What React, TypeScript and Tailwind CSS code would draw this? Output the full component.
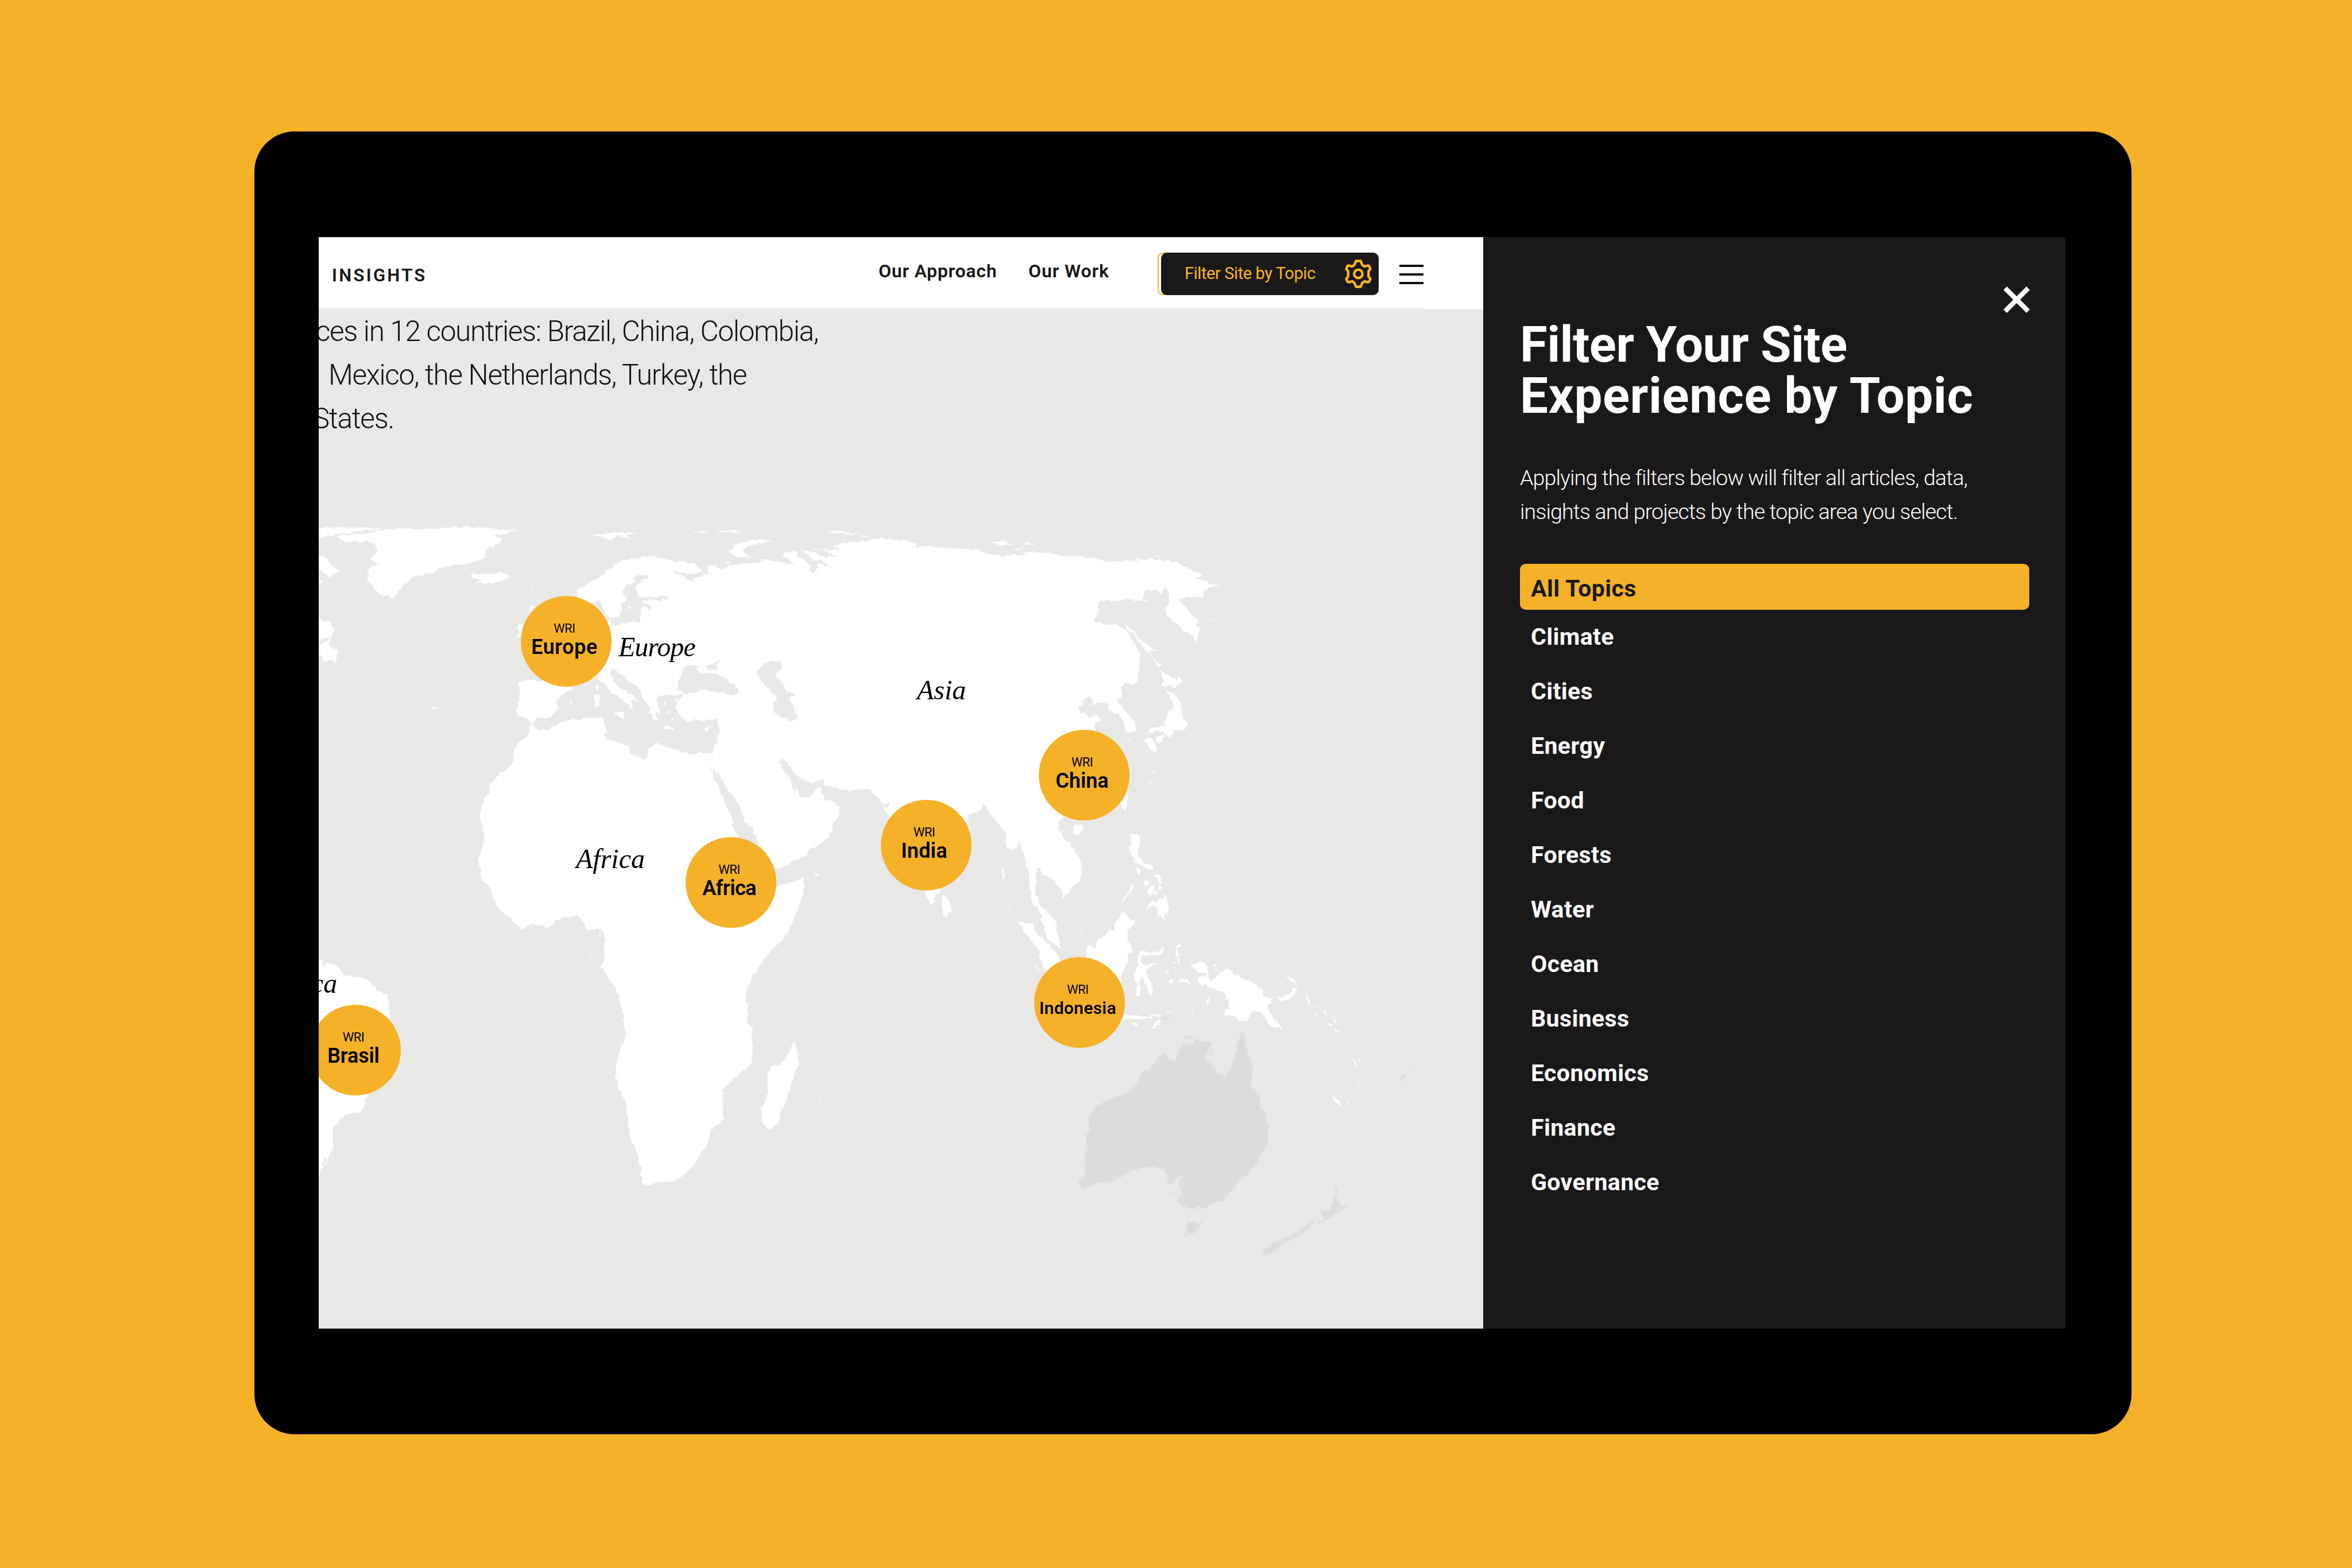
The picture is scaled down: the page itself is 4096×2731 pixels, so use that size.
const TOPICS = ["Climate", "Cities", "Energy", "Food", "Forests", "Water", "Ocean", "Business", "Economics", "Finance", "Governance"];

type Office = { name: string; x: number; y: number; text: string };

const OFFICES: Office[] = [
  { name: "Europe", x: 431, y: 579.5, text: "text-[36px] tracking-[0.5px]" },
  { name: "Africa", x: 718, y: 1000, text: "text-[36px] tracking-[-0.6px]" },
  { name: "India", x: 1057.5, y: 935, text: "text-[36px] tracking-[0.2px]" },
  { name: "China", x: 1332.5, y: 812.5, text: "text-[36px] tracking-[0px]" },
  { name: "Indonesia", x: 1325, y: 1209, text: "text-[30px] tracking-[0.3px]" },
  { name: "Brasil", x: 63.5, y: 1292, text: "text-[36px] tracking-[-0.2px]" },
];

function Pin({ office }: { office: Office }) {
  return (
    <div
      className="absolute flex h-[158px] w-[158px] -translate-x-1/2 -translate-y-1/2 flex-col items-center rounded-full bg-[#f5b229] pr-[6px] pt-[45px] text-black"
      style={{ left: office.x, top: office.y }}
    >
      <span className="text-[22px] leading-[24px] tracking-[-0.6px]">WRI</span>
      <span className={`${office.text} mt-[2px] font-semibold leading-[36px]`}>{office.name}</span>
    </div>
  );
}

const LAND = "fill-white";
const SEA = "fill-[#e8e8e6]";
const MUTED = "fill-[#dcdcdc]";

function WorldMap() {
  return (
    <svg className="absolute inset-0 h-full w-full" viewBox="813 787 2970.5 2602" preserveAspectRatio="none">
      <defs>
        <filter id="coast" x="-5%" y="-5%" width="110%" height="110%" colorInterpolationFilters="sRGB">
          <feTurbulence type="fractalNoise" baseFrequency="0.07" numOctaves={3} seed={4} />
          <feDisplacementMap in="SourceGraphic" scale={12} xChannelSelector="R" yChannelSelector="G" />
        </filter>
      </defs>
      <g filter="url(#coast)">
        {/* Greenland, Iceland, eastern Canada */}
        <g transform="translate(800 1300) scale(.5102 .4464)" className={LAND}>
          <path d="M115 155 160 145 250 137 340 118 440 110 540 112 640 102 780 100 920 108 860 112 1053 118 980 125 960 142 900 150 940 165 935 195 900 200 905 215 865 225 855 278 800 300 740 315 680 323 660 320 600 358 540 378 500 380 470 415 435 450 410 495 390 510 365 492 330 488 305 455 275 410 270 360 280 330 325 310 285 290 310 255 320 220 305 190 245 183 160 186Z" />
          <path d="M0 112 100 105 250 103 350 110 250 120 150 137 60 157 0 162Z" />
          <path d="M0 255 40 268 75 280 75 305 135 350 100 370 80 388 60 370 40 355 0 335Z" />
          <path d="M0 380 30 395 45 420 25 432 0 440Z" />
          <path d="M0 615 30 620 50 640 80 640 102 685 95 725 60 735 0 750 0 800 40 770 85 732 75 775 100 795 118 800 120 850 105 880 90 860 60 865 40 875 50 850 0 800Z" />
          <path d="M1020 658 1060 655 1050 730 1012 728 1030 705 1020 680Z" />
          <path d="M1082 560 1090 550 1100 545 1095 560 1085 580Z" />
          <path d="M1088 452 1102 452 1098 468Z" />
          <path d="M1195 500 1202 488 1208 500Z" />
          <path d="M585 1140 600 1132 625 1133 605 1143Z" />
          <path d="M650 1160 665 1160 660 1168Z" />
          <path d="M832 1335 840 1332 843 1340Z" />
          <path d="M1068 270 1085 264 1078 272Z" />
        </g>
        {/* Europe, western Asia and Africa */}
        <g transform="translate(1200 1300) scale(.6378 .574)">
          <path
            className={LAND}
            d="M425 355 455 340 470 325 510 312 520 295 545 275 575 245 600 232 640 222 690 210 720 207 760 215 800 225 850 230 900 245 930 265 925 280 890 285 850 280 800 267 845 290 860 310 900 322 885 305 935 300 930 290 960 282 945 270 955 245 990 250 975 258 1000 266 1030 250 1090 240 1130 242 1150 235 1180 240 1145 217 1200 228 1245 235 1300 245 1275 225 1250 210 1258 190 1300 185 1310 205 1330 220 1350 240 1365 255 1350 272 1375 277 1390 255 1385 240 1430 250 1450 262 1400 225 1370 225 1360 205 1335 190 1320 180 1380 190 1400 205 1460 210 1478 215 1440 195 1400 180 1370 175 1440 180 1480 178 1450 165 1490 150 1568 143 1620 143 1620 1243 1568 1243 1500 1247 1460 1240 1420 1228 1405 1195 1370 1215 1330 1200 1300 1180 1280 1145 1250 1105 1228 1125 1250 1160 1280 1200 1285 1225 1300 1258 1300 1225 1312 1270 1325 1280 1370 1270 1395 1225 1405 1260 1420 1285 1450 1300 1478 1328 1470 1360 1450 1390 1445 1430 1425 1460 1400 1490 1350 1510 1345 1535 1290 1561 1240 1596 1222 1601 1225 1671 1290 1656 1330 1636 1333 1671 1325 1731 1300 1801 1280 1856 1245 1916 1220 1936 1185 1981 1155 2036 1128 2076 1105 2131 1096 2181 1108 2196 1105 2221 1113 2291 1127 2311 1128 2446 1110 2481 1055 2526 1007 2581 1013 2681 1005 2726 965 2751 958 2771 945 2836 925 2856 900 2906 865 2946 830 2976 795 2989 750 2991 705 3006 681 2989 690 2971 680 2951 688 2926 675 2896 660 2836 640 2801 628 2706 627 2656 600 2581 580 2526 583 2466 597 2396 615 2366 620 2326 607 2271 612 2251 597 2181 580 2126 545 2071 522 2026 538 1991 532 1951 540 1906 530 1876 515 1861 468 1871 445 1821 430 1804 375 1811 345 1831 310 1856 245 1843 207 1866 180 1843 150 1806 110 1771 95 1731 75 1676 45 1641 38 1586 30 1555 45 1520 55 1460 50 1410 38 1375 40 1340 55 1285 75 1255 80 1215 108 1180 150 1150 172 1115 170 1080 185 1045 230 1000 240 965 248 955 225 925 193 920 183 885 195 850 198 800 190 772 215 757 285 765 400 700 500 520 555 500 548 470 530 440 510 400 490 420 450 400 428 385Z"
          />
          {/* Red Sea, Mediterranean, Baltic, Black and Caspian seas */}
          <g className={SEA}>
            <path d="M943 1112 965 1155 985 1178 990 1165 1010 1210 1030 1250 1050 1275 1080 1320 1095 1380 1130 1420 1160 1500 1228 1601 1228 1671 1080 1460 1055 1430 1040 1345 1018 1310 1010 1280 985 1215 965 1165Z" />
            <path d="M244 955 265 925 310 930 330 905 355 880 345 860 360 830 405 800 410 775 510 745 530 765 545 795 605 845 635 870 632 895 650 880 640 845 670 852 655 830 620 805 585 785 560 740 560 715 580 707 625 755 685 805 690 840 720 880 715 900 735 935 750 935 735 900 765 910 745 870 750 830 780 825 815 825 855 823 850 832 820 845 825 870 830 900 850 930 870 945 900 930 925 942 990 930 985 955 992 985 980 1040 970 1083 920 1075 880 1090 830 1070 770 1050 745 1038 712 1060 708 1100 695 1108 640 1080 630 1050 575 1035 530 1005 545 980 530 925 500 925 440 930 375 940 330 965 310 978 265 975Z" />
            <path d="M548 470 555 478 590 480 605 450 605 415 625 395 612 385 607 365 620 340 660 322 655 310 665 292 700 290 712 300 680 325 660 340 668 370 672 390 690 392 775 385 802 397 750 402 690 400 690 412 720 425 727 440 710 448 700 430 680 440 683 470 685 500 625 500 570 515Z" />
            <path d="M880 685 915 700 905 710 925 735 960 725 1000 740 1060 780 1073 805 1050 825 1000 815 940 800 895 810 870 820 830 805 830 770 845 740 850 705Z" />
            <path d="M940 695 1005 668 985 690 990 710 955 715Z" />
            <path d="M1150 710 1185 680 1215 672 1240 680 1245 710 1225 720 1225 745 1255 775 1270 820 1275 800 1300 825 1275 830 1290 870 1310 930 1270 937 1215 905 1212 870 1225 835 1180 785 1147 738Z" />
          </g>
          <g className={LAND}>
            <path d="M497 830 518 822 518 872 500 875Z" />
            <path d="M500 785 513 780 510 808Z" />
            <path d="M572 905 620 897 615 932 585 915Z" />
            <path d="M772 963 818 970 815 980 775 974Z" />
            <path d="M930 975 970 962 945 990Z" />
            <path d="M390 862 408 850 402 866Z" />
            <path d="M632 440 645 430 638 455Z" />
            <path d="M765 850 785 860 778 870ZM785 890 800 895 790 905ZM800 930 812 935 805 942Z" />
            <path d="M1035 190 1065 155 1100 143 1180 133 1207 138 1110 160 1083 185 1120 212 1065 210Z" />
            <path d="M478 108 540 110 570 102 665 103 620 115 645 127 590 120 555 137 520 120Z" />
            <path d="M880 100 920 97 960 100 920 103ZM980 98 1040 92 1105 97 1040 102Z" />
            <path d="M1425 97 1480 96 1555 112 1500 108Z" />
            <path d="M1010 235 1035 233 1030 242Z" />
            <path d="M0 288 20 283 40 292 100 285 120 277 155 297 130 315 75 330 20 322 45 312 5 302Z" />
          </g>
        </g>
        {/* Madagascar and nearby islands */}
        <g transform="translate(1200 2150) scale(.6378 .574)" className={LAND}>
          <path d="M1297 877 1308 920 1313 980 1300 1010 1290 1045 1265 1130 1245 1200 1228 1255 1192 1270 1170 1250 1163 1180 1190 1115 1187 1035 1200 1000 1240 985 1270 940Z" />
          <path d="M1375 133 1395 140 1380 146ZM1390 1138 1402 1140 1398 1150ZM514 405 522 400 518 416ZM475 502 481 505 477 514Z" />
        </g>
        {/* South America */}
        <g transform="translate(800 2400) scale(.3333 .4145)">
          <path
            className={LAND}
            d="M0 110 75 122 68 165 110 135 160 150 215 190 225 218 260 205 330 228 385 227 430 250 490 305 520 320 555 325 575 370 585 420 575 475 500 700 420 945 395 985 390 1020 360 1050 270 1060 195 1100 155 1145 145 1190 155 1240 150 1275 115 1320 100 1375 60 1400 42 1455 0 1530Z"
          />
          <path className={SEA} d="M55 1395 78 1340 98 1340 85 1378Z" />
        </g>
        {/* Central and eastern Asia */}
        <g transform="translate(2100 1300) scale(.7015 .6378)" className={LAND}>
          <path d="M90 130 150 128 175 118 215 115 300 122 340 138 335 150 375 148 440 152 500 157 560 160 600 178 640 188 680 180 740 183 720 170 790 172 840 176 890 190 940 187 990 195 1020 207 1110 207 1170 215 1120 202 1200 198 1280 208 1385 268 1350 272 1395 290 1443 310 1410 308 1385 325 1378 355 1340 348 1290 360 1310 380 1340 415 1345 430 1368 450 1355 458 1365 480 1360 524 1320 490 1270 445 1248 415 1245 395 1258 370 1255 325 1240 310 1235 320 1230 340 1210 320 1170 325 1160 355 1185 362 1150 368 1100 358 1060 365 1010 365 1000 385 1000 410 982 448 1000 450 1020 460 1050 458 1090 470 1115 500 1120 520 1152 575 1148 630 1140 690 1125 702 1098 692 1080 715 1085 740 1068 770 1090 795 1115 825 1132 850 1138 880 1100 895 1095 860 1075 820 1040 805 1035 775 1010 767 975 788 980 760 962 748 945 765 945 785 922 792 930 808 955 815 965 832 1000 822 1015 835 990 855 983 880 1000 950 1060 1060 1000 1160 870 1228 855 1245 855 1285 880 1320 910 1355 935 1400 942 1450 935 1480 905 1510 870 1560 870 1530 845 1495 820 1465 790 1450 788 1432 775 1432 775 1470 768 1568 755 1568 750 1480 735 1400 720 1350 710 1328 700 1355 680 1365 665 1350 665 1300 640 1260 610 1220 595 1190 580 1175 570 1200 560 1212 540 1215 525 1222 525 1250 480 1400 430 1515 408 1545 405 1570 392 1580 378 1555 370 1525 300 1400 245 1235 225 1205 220 1190 235 1192 240 1180 215 1175 200 1155 165 1115 130 1115 90 1122Z" />
          <path d="M430 1535 445 1545 460 1580 465 1610 450 1630 438 1620 432 1580Z" />
          <path d="M1103 1135 1105 1170 1100 1208 1083 1180 1095 1150Z" />
          <path d="M905 1275 920 1260 943 1262 940 1285 925 1305 910 1295Z" />
          <path d="M1095 460 1115 470 1150 515 1215 572 1185 565 1195 590 1235 625 1218 628 1205 605 1160 545 1130 500 1110 485Z" />
          <path d="M1218 642 1250 660 1285 680 1290 668 1308 690 1288 700 1285 717 1260 705 1235 712 1230 695 1240 690 1235 670Z" />
          <path d="M1240 712 1260 730 1285 745 1300 775 1302 810 1325 860 1310 885 1285 880 1270 890 1262 915 1245 895 1215 885 1180 900 1190 875 1245 865 1240 850 1250 830 1258 800 1270 795 1268 770 1255 735Z" />
          <path d="M1210 910 1240 900 1235 920 1215 935Z" />
          <path d="M1160 925 1180 912 1205 925 1208 975 1190 965 1180 935Z" />
          <path d="M600 130 650 126 695 140 640 142ZM718 134 778 140 740 142ZM695 152 735 158 700 160Z" />
          <path d="M15 86 110 98 50 98ZM130 102 185 106 150 109Z" />
          <path d="M1212 181 1230 187 1218 189ZM1108 916 1120 920 1112 924ZM1412 438 1432 446 1420 447ZM1338 630 1342 626 1340 638Z" />
          <path d="M1352 530 1358 532 1354 545ZM1200 1040 1206 1045 1200 1068ZM1192 1085 1197 1088 1192 1100ZM654 1425 658 1440 655 1485 651 1450Z" />
        </g>
        {/* South-east Asian islands */}
        <g transform="translate(2550 2080) scale(.3954)">
          <g className={LAND}>
            <path d="M180 280 240 280 238 400 225 460 230 510 250 540 275 600 330 640 365 700 372 760 398 858 350 830 305 790 290 740 275 690 270 650 240 600 200 550 205 480 192 380Z" />
            <path d="M122 680 150 690 200 695 230 745 300 820 330 850 365 885 390 915 400 960 300 1005 265 930 240 850 200 800 165 760 130 710Z" />
            <path d="M795 620 835 665 870 690 850 720 820 745 830 800 865 885 835 885 820 960 785 1020 785 1100 600 1000 555 915 560 860 575 838 620 855 630 805 680 785 710 730 755 690 775 655Z" />
            <path d="M905 885 930 868 960 885 1020 885 1060 850 1055 885 1030 905 960 900 915 905 908 950 940 970 1000 950 1000 970 970 975 945 1010 970 1060 990 1130 985 1165 960 1150 945 1090 925 1050 910 1050 905 1165 878 1165 885 1080 865 1060 880 990 895 960 895 920Z" />
            <path d="M842 118 890 122 905 165 908 200 890 240 895 270 935 310 985 325 990 360 965 355 930 330 890 310 865 290 850 250 835 215 845 200Z" />
            <path d="M872 335 905 350 908 385 890 375ZM985 375 1035 380 1045 435 1025 430 1010 395ZM932 408 965 425 950 455 935 450ZM965 455 990 450 1000 480 975 525 955 495ZM1010 480 1022 492 992 508ZM1030 440 1050 495 1020 470Z" />
            <path d="M1070 500 1080 560 1093 605 1085 640 1070 620 1062 672 1020 645 1015 600 990 580 960 600 950 615 955 580 990 548 1005 572 1030 545 1060 535Z" />
            <path d="M853 430 872 460 845 495 800 558 800 540 840 480ZM790 575 800 560 796 580ZM790 605 800 608 796 618Z" />
            <path d="M1160 812 1168 840 1145 860 1172 900 1152 905 1162 960 1140 930 1138 850ZM1125 940 1140 950 1130 960Z" />
            <path d="M1145 1075 1165 1053 1220 1058 1238 1090 1200 1072ZM1085 1070 1105 1058 1122 1072 1105 1092ZM1035 1000 1090 1002 1088 1020 1070 1008ZM1130 990 1150 995 1135 1002Z" />
            <path d="M795 1280 850 1290 920 1298 1040 1282 1038 1295 930 1312 860 1312 790 1320ZM1065 1262 1120 1258 1080 1272ZM1230 1272 1256 1236 1244 1265Z" />
            <path d="M848 1342 880 1330 904 1368 870 1357ZM983 1368 1010 1330 1042 1318 1032 1350 1000 1372ZM960 1396 978 1382 970 1398Z" />
            <path d="M1328 1228 1332 1190 1350 1162 1354 1200ZM185 860 208 885 205 898ZM140 795 162 812 155 820ZM232 960 252 995 240 1000ZM525 740 532 750 526 762Z" />
            <path d="M1225 930 1250 935 1230 942ZM1205 1005 1222 1002 1214 1014ZM1380 955 1410 972 1390 975ZM1375 990 1425 1000 1400 1005ZM1104 720 1110 740 1106 752Z" />
            <path d="M50 555 58 580 54 582ZM66 605 76 622 70 626ZM20 335 28 350 24 420 18 380Z" />
          </g>
          <path className={MUTED} d="M1040 1318 1060 1300 1110 1295 1080 1315 1035 1328ZM715 740 728 715 745 705 735 742Z" />
        </g>
        {/* New Guinea, Melanesia, Australia and New Zealand */}
        <g transform="translate(2650 2400) scale(.6378 .5421)">
          <g className={LAND}>
            <path d="M608 120 650 95 675 115 675 150 685 188 692 190 720 160 745 132 780 155 830 185 870 205 895 235 897 260 930 275 932 297 915 300 925 340 945 370 975 418 920 403 905 365 885 335 860 328 840 355 835 375 800 378 780 350 735 350 745 325 765 318 755 280 740 245 690 220 670 205 650 210 632 172 665 172 668 152 640 150Z" />
            <path d="M945 262 980 268 1005 250 1020 220 1035 225 1010 270 975 283ZM985 160 1020 182 1040 225 1025 205ZM915 148 930 150 920 155Z" />
            <path d="M1066 245 1090 300 1072 288ZM1098 293 1122 318 1110 312ZM1130 318 1160 354 1140 338ZM1174 348 1190 395 1178 380ZM1148 380 1174 395 1158 398ZM1180 408 1199 425 1188 424ZM1096 330 1124 360 1108 348Z" />
            <path d="M1258 548 1268 570 1272 605 1262 580ZM1280 555 1290 560 1282 575ZM1272 638 1278 642 1275 648ZM1280 672 1286 680 1281 688ZM1266 424 1272 424 1268 428ZM1020 446 1032 450 1026 454ZM1016 372 1024 376 1020 378Z" />
            <path d="M1173 715 1200 750 1217 785 1190 762ZM1228 738 1234 745 1230 750ZM1236 758 1242 762 1238 766Z" />
          </g>
          <g className={MUTED}>
            <path d="M152 1130 175 1120 187 1075 187 1000 190 960 188 910 203 900 198 850 215 800 235 775 285 742 335 720 370 705 400 660 405 625 440 605 470 560 505 525 522 560 545 565 560 520 580 487 620 480 625 460 650 475 695 480 680 510 665 550 700 600 740 645 755 635 780 560 790 490 815 420 828 480 832 545 850 550 855 620 850 685 885 730 890 790 905 800 920 870 920 910 905 970 870 1045 845 1085 790 1140 740 1220 690 1240 655 1265 635 1250 605 1265 560 1240 557 1215 567 1180 560 1140 575 1095 515 1155 512 1115 505 1080 465 1062 420 1068 375 1085 330 1105 300 1132 235 1135 195 1165 170 1160Z" />
            <path d="M575 450 600 443 622 460 590 463ZM515 1187 565 1174 550 1186ZM686 515 696 520 690 538Z" />
            <path d="M595 1316 630 1326 655 1320 620 1375 582 1392 590 1345ZM590 1300 602 1285 598 1298ZM664 1295 670 1300 666 1308Z" />
            <path d="M1183 1142 1195 1180 1190 1220 1210 1245 1239 1243 1210 1268 1170 1300 1112 1338 1138 1300 1128 1283 1165 1265 1180 1220Z" />
            <path d="M1092 1316 1106 1325 1035 1395 1000 1410 930 1472 888 1477 892 1455 960 1410 1030 1375Z" />
            <path d="M1443 652 1458 632 1470 632 1465 655 1450 661ZM1478 612 1506 596 1500 610Z" />
          </g>
        </g>
      </g>
    </svg>
  );
}

function Gear() {
  return (
    <svg className="h-[50px] w-[47px]" viewBox="-34.3 -36.6 68.6 73.2" fill="none" stroke="#fbb51f" strokeWidth="6.4" strokeLinejoin="round">
      <path d="M-6-33 6-33 10-22.7 16-18.8 23.5-21.3 27.6-20.2 30.8-12.3 26-7 26 7 30.8 12.3 27.6 20.2 23.5 21.3 16 18.8 10 22.7 6 33-6 33-10 22.7-16 18.8-23.5 21.3-27.6 20.2-30.8 12.3-26 7-26-7-30.8-12.3-27.6-20.2-23.5-21.3-16-18.8-10-22.7Z" />
      <circle r="10.6" />
    </svg>
  );
}

function Header() {
  return (
    <header className="relative z-10 flex h-[124px] items-start bg-white pl-[23px] pr-[104px] text-[#171717]">
      <span className="mt-[52px] text-[31px] font-semibold leading-[30px] tracking-[3.3px]">INSIGHTS</span>
      <nav className="ml-auto mt-[43px] flex whitespace-nowrap text-[32px] font-semibold leading-[32px]">
        <a className="w-[261px] tracking-[0.75px]">Our Approach</a>
        <a className="w-[225px] tracking-[0.9px]">Our Work</a>
      </nav>
      <div className="mt-[27px] h-[74px] w-[385px] rounded-[9px] border-2 border-[#f8b323]">
        <button className="-mt-[2px] ml-[4px] flex h-[74px] w-[379px] items-start rounded-[10px] bg-[#1a1818] pl-[41px] pt-[20px] text-[29px] leading-[32px] tracking-[-0.4px] text-[#fbb51f]">
          <span className="whitespace-nowrap">Filter Site by Topic</span>
          <span className="-mt-[8px] ml-auto mr-[12px]">
            <Gear />
          </span>
        </button>
      </div>
      <div className="ml-[36px] mt-[48px] flex w-[42px] flex-col gap-[10.6px]">
        <span className="h-[4.4px] bg-[#111]" />
        <span className="h-[4.4px] bg-[#111]" />
        <span className="h-[4.4px] bg-[#111]" />
      </div>
      <div className="absolute right-0 top-full h-[2px] w-[102px] bg-white" />
    </header>
  );
}

function MapView() {
  return (
    <div className="relative flex-1 overflow-hidden bg-[#e8e8e6]">
      <WorldMap />
      <div className="relative flex flex-col whitespace-nowrap pt-[2px] text-[49.5px] font-[340] leading-[76px] tracking-[-1.3px] text-[#111]">
        <span className="flex w-[870px] justify-end">ces in 12 countries: Brazil, China, Colombia,</span>
        <span className="flex w-[745px] justify-end">Mexico, the Netherlands, Turkey, the</span>
        <span className="flex w-[131px] justify-end">States.</span>
      </div>
      <div className="font-['Liberation_Serif',serif] text-[48px] italic leading-[48px] text-black">
        <span className="absolute left-[522px] top-[566px] tracking-[-1px]">Europe</span>
        <span className="absolute left-[1042px] top-[641px]">Asia</span>
        <span className="absolute left-[448px] top-[935px]">Africa</span>
        <span className="absolute left-[-13px] top-[1152px]">ca</span>
      </div>
      {OFFICES.map((o) => (
        <Pin key={o.name} office={o} />
      ))}
    </div>
  );
}

function FilterPanel() {
  return (
    <aside className="flex w-[1014px] flex-col bg-[#1a1819] pl-[64px] pr-[63px] pt-[86px] text-white">
      <svg className="-mr-px h-[46px] w-[46px] self-end" viewBox="0 0 46 46" stroke="white" strokeWidth="8.4">
        <path d="M3 3 43 43M43 3 3 43" />
      </svg>
      <h1 className="mt-[11px] whitespace-nowrap text-[87px] font-bold leading-[88.6px]">
        <span className="block tracking-[-0.6px]">Filter Your Site</span>
        <span className="block tracking-[0.6px]">Experience by Topic</span>
      </h1>
      <p className="mt-[70px] whitespace-nowrap text-[37.5px] font-[320] leading-[58.9px] tracking-[-0.85px]">
        Applying the filters below will filter all articles, data,
        <br />
        insights and projects by the topic area you select.
      </p>
      <ul className="mt-[61px] text-[41px] font-bold leading-[95px] tracking-[0.4px]">
        <li className="h-[80px] rounded-[10px] bg-[#f5b229] pl-[19px] pt-[5px] leading-[76px] text-[#1a1819]">All Topics</li>
        {TOPICS.map((t) => (
          <li key={t} className="pl-[19px]">
            {t}
          </li>
        ))}
      </ul>
    </aside>
  );
}

export default function App() {
  return (
    <div className="h-[2731px] w-[4096px] overflow-hidden bg-[#f5b229] pl-[443px] pt-[229px] font-['Roboto',sans-serif]">
      <div className="h-[2269px] w-[3269px] rounded-[70px] bg-black pl-[112px] pt-[184px]">
        <div className="flex h-[1901px] w-[3042px] overflow-hidden">
          <main className="flex w-[2028px] flex-col">
            <Header />
            <MapView />
          </main>
          <FilterPanel />
        </div>
      </div>
    </div>
  );
}
